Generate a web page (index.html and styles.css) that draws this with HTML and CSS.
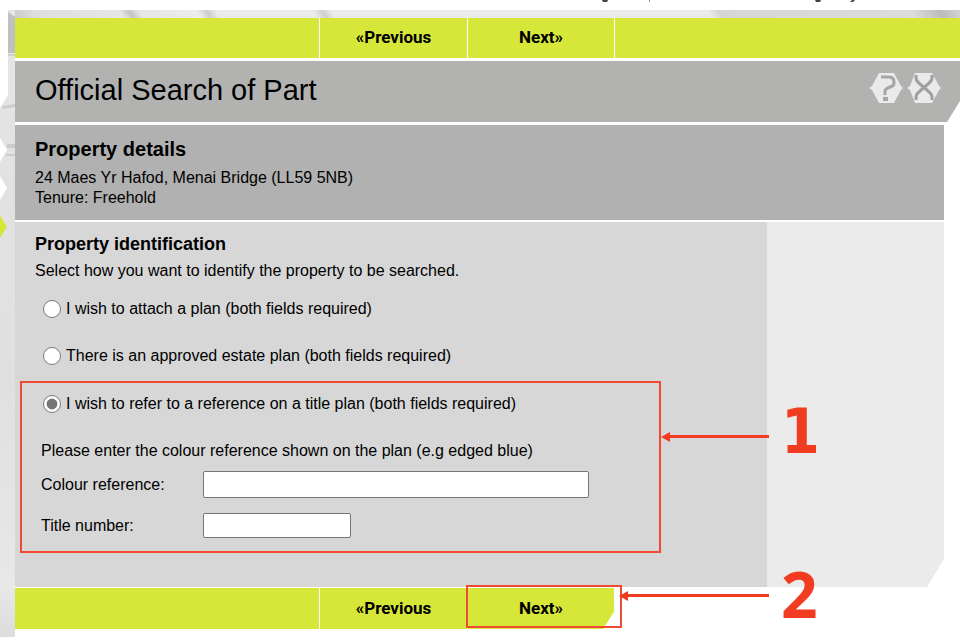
FILE: index.html
```
<!DOCTYPE html>
<html lang="en">
<head>
<meta charset="UTF-8">
<meta name="viewport" content="width=device-width, initial-scale=1">
<title>Official Search of Part</title>
<link rel="stylesheet" href="styles.css">
</head>
<body>
<svg class="toplinks" width="960" height="10" aria-hidden="true">
	<path d="M602 0h6l-1 2h-4zM815 0h6l-1 2h-4zM852 0h3l-2 2h-3z" fill="#444"/>
	<path d="M649 0h1v2h-1z" fill="#888"/>
</svg>
<div id="page">
	<svg class="rail" width="15" height="627" aria-hidden="true">
		<defs>
			<linearGradient id="stone" x1="0" y1="0" x2="0" y2="1">
				<stop offset="0" stop-color="#e6e6e6"/>
				<stop offset=".25" stop-color="#e2e2e2"/>
				<stop offset=".6" stop-color="#e0e0e0"/>
				<stop offset=".92" stop-color="#e8e8e8"/>
				<stop offset="1" stop-color="#dcdcdc"/>
			</linearGradient>
		</defs>
		<path d="M8 0h7v627H0V98l8-13z" fill="url(#stone)"/>
		<path d="M8 2l7 5v36H8z" fill="#c0c0c0"/>
		<path d="M8 44h7v2H8z" fill="#cfcfcf"/>
		<path d="M3 96l12-2v3L2 99zM7 134h8v4H7zM7 144h8v2H5z" fill="#cbcbcb"/>
		<path d="M0 128l7 12-7 12zM0 166l7 12-7 12z" fill="#fff"/>
		<path d="M0 205l7 12-7 11z" fill="#d6e739"/>
	</svg>

	<div class="bar">
		<button type="button" class="prev">«Previous</button>
		<button type="button" class="next">Next»</button>
	</div>

	<div id="header">
		<h1>Official Search of Part</h1>
		<a href="#" class="tool" aria-label="Help">
			<svg width="34" height="30" viewBox="0 0 34 30">
				<path d="M0 15l3-2L10 0h15l7 13 2 2-2 2-7 13H10L3 17z" fill="#eaeaea"/>
				<path d="M12 4h8q5 0 5 5v1q0 3-4 4-5 2-5 4v4" fill="none" stroke="#a5a5a5" stroke-width="3"/>
				<path d="M14 24h5v4h-5z" fill="#a5a5a5"/>
			</svg>
		</a>
		<a href="#" class="tool" aria-label="Close">
			<svg width="34" height="30" viewBox="0 0 34 30">
				<path d="M0 15l3-2L8 0h17l7 13 2 2-2 2-7 13H8L3 17z" fill="#eaeaea"/>
				<path d="M9 2v3q0 3 4 6l8 7q4 3 4 6v3M25 2v3q0 3-4 6l-8 7q-4 3-4 6v3" fill="none" stroke="#a0a0a0" stroke-width="3"/>
			</svg>
		</a>
	</div>

	<div id="details">
		<h2>Property details</h2>
		<p>24 Maes Yr Hafod, Menai Bridge (LL59 5NB)<br>Tenure: Freehold</p>
	</div>

	<div id="main">
		<form id="search">
			<h3>Property identification</h3>
			<p>Select how you want to identify the property to be searched.</p>
			<div class="option">
				<input type="radio" name="ident" id="attach">
				<label for="attach">I wish to attach a plan (both fields required)</label>
			</div>
			<div class="option">
				<input type="radio" name="ident" id="estate">
				<label for="estate">There is an approved estate plan (both fields required)</label>
			</div>
			<div class="callout">
				<div class="option">
					<input type="radio" name="ident" id="title" checked>
					<label for="title">I wish to refer to a reference on a title plan (both fields required)</label>
				</div>
				<p>Please enter the colour reference shown on the plan (e.g edged blue)</p>
				<div class="field">
					<label for="colour">Colour reference:</label>
					<input type="text" id="colour" class="long">
				</div>
				<div class="field">
					<label for="number">Title number:</label>
					<input type="text" id="number" class="short">
				</div>
				<div class="marker marker1">
					<svg width="108" height="10"><path d="M0 5l9-5v3h99v3H9v4z" fill="#f23c22"/></svg>
					<span>1</span>
				</div>
			</div>
		</form>
	</div>

	<div class="bar bottom">
		<button type="button" class="prev">«Previous</button>
		<div class="nextwrap">
			<button type="button" class="next">Next»</button>
			<div class="ring"></div>
			<div class="marker marker2">
				<svg width="150" height="10"><path d="M0 5l9-5v3h141v3H9v4z" fill="#f23c22"/></svg>
				<span>2</span>
			</div>
		</div>
	</div>
</div>
</body>
</html>
```

FILE: styles.css
```
* {
	box-sizing: border-box;
}
body {
	margin: 0;
	background: #fff;
	color: #000;
	font-family: "Liberation Sans", Arial, sans-serif;
	font-size: 16px;
	line-height: 20px;
	overflow-x: hidden;
}
h1, h2, h3, p {
	margin: 0;
}
.toplinks {
	display: block;
}
#page {
	position: relative;
	padding: 8px 0 8px 15px;
	background: linear-gradient(60deg, #c4c4c4 0, #dedede 3%, #e6e6e6 12%, #c4c4c4 13%, #e6e6e6 14%, #ececec 20%, #cdcdcd 21%, #ebebeb 22%, #ebebeb 32%, #d0d0d0 33%, #ebebeb 34%, #ebebeb 73%, #d6d6d6 74%, #dcdcdc 94%, #bcbcbc 97%, #dedede) no-repeat 8px 0 / 100% 8px;
}

/* stone strip down the left edge */
.rail {
	position: absolute;
	left: 0;
	top: 0;
}

/* previous / next bars */
.bar {
	position: relative;
	display: flex;
	height: 40px;
	padding-left: 304px;
	background: #d6e739;
}
.bar button {
	height: 100%;
	margin: 0;
	padding: 0 0 2px;
	border: 0;
	border-left: 1px solid #fff;
	background: #d6e739;
	font-family: Roboto, sans-serif;
	font-size: 17px;
	font-weight: bold;
	color: #000;
	cursor: pointer;
}
.bar .prev {
	width: 148px;
}
.bar .next {
	width: 148px;
	border-right: 1px solid #fff;
}
.bottom {
	height: 41px;
	margin-top: 1px;
	background: linear-gradient(#d6e739, #d6e739) no-repeat 0 0 / 304px 100%;
}
.nextwrap {
	position: relative;
}
.nextwrap .next {
	clip-path: polygon(0 0, 100% 0, 100% 22px, calc(100% - 12px) 100%, 0 100%);
}

#header {
	position: relative;
	display: flex;
	align-items: flex-start;
	gap: 4px;
	height: 61px;
	margin-top: 3px;
	padding: 12px 19px 0 20px;
	background: #b2b2b1;
	clip-path: polygon(0 0, 100% 0, 100% 40px, calc(100% - 13px) 100%, 0 100%);
}
h1 {
	flex: 1;
	font-size: 29px;
	font-weight: normal;
	line-height: 35px;
}
.tool svg {
	display: block;
}
#details {
	position: relative;
	height: 95px;
	margin: 3px 16px 0 0;
	padding: 12px 20px;
	background: #b1b1b1;
}
h2 {
	font-size: 20px;
	line-height: 24px;
}
#details p {
	margin-top: 7px;
}

#main {
	margin: 2px 16px 0 0;
	padding-right: 177px;
	background: linear-gradient(90deg, #d7d7d7 calc(100% - 177px), #ebebeb calc(100% - 177px));
	clip-path: polygon(0 0, 100% 0, 100% calc(100% - 28px), calc(100% - 17px) 100%, 0 100%);
}
#search {
	padding: 12px 20px 34px;
}
h3 {
	font-size: 18px;
	line-height: 20px;
}
#search > p {
	margin: 7px 0 18px;
}
.option {
	display: flex;
	align-items: center;
	gap: 5px;
	height: 20px;
	margin: 0 0 27px 8px;
}
.option input {
	width: 18px;
	height: 18px;
	margin: 0;
	accent-color: #757575;
}

/* red box round the fields to fill in */
.callout {
	position: relative;
	margin: -12px 86px 0 -15px;
	padding: 11px 19px 13px;
	border: 2px solid #f04a35;
}
.callout .option {
	margin-left: 2px;
}
.callout p {
	margin-bottom: 10px;
}
.field {
	display: flex;
	align-items: center;
}
.field + .field {
	margin-top: 15px;
}
.field label {
	width: 162px;
}
.field input {
	height: 27px;
	margin: 0;
	padding: 2px 4px;
	border: 1px solid #767676;
	border-radius: 2px;
	background: #fff;
	font-family: inherit;
	font-size: 16px;
}
.field .long {
	width: 386px;
}
.field .short {
	width: 148px;
	height: 25px;
}

/* numbered arrows */
.marker {
	position: absolute;
	display: flex;
	align-items: flex-start;
	gap: 12px;
	color: #f23c22;
	font-family: "Open Sans", "Noto Sans", sans-serif;
	font-size: 64px;
	font-weight: bold;
	line-height: 60px;
}
.marker1 {
	left: calc(100% + 2px);
	top: 19px;
	font-family: "DejaVu Sans Condensed", "DejaVu Sans", sans-serif;
	font-size: 62px;
}
.marker1 svg {
	margin-top: 30px;
}
.marker2 {
	left: calc(100% + 4px);
	top: -24px;
}
.marker2 svg {
	margin-top: 27px;
}
.ring {
	position: absolute;
	left: -1px;
	top: -3px;
	width: 156px;
	height: 43px;
	border: 2px solid #f04a35;
	pointer-events: none;
}
```
